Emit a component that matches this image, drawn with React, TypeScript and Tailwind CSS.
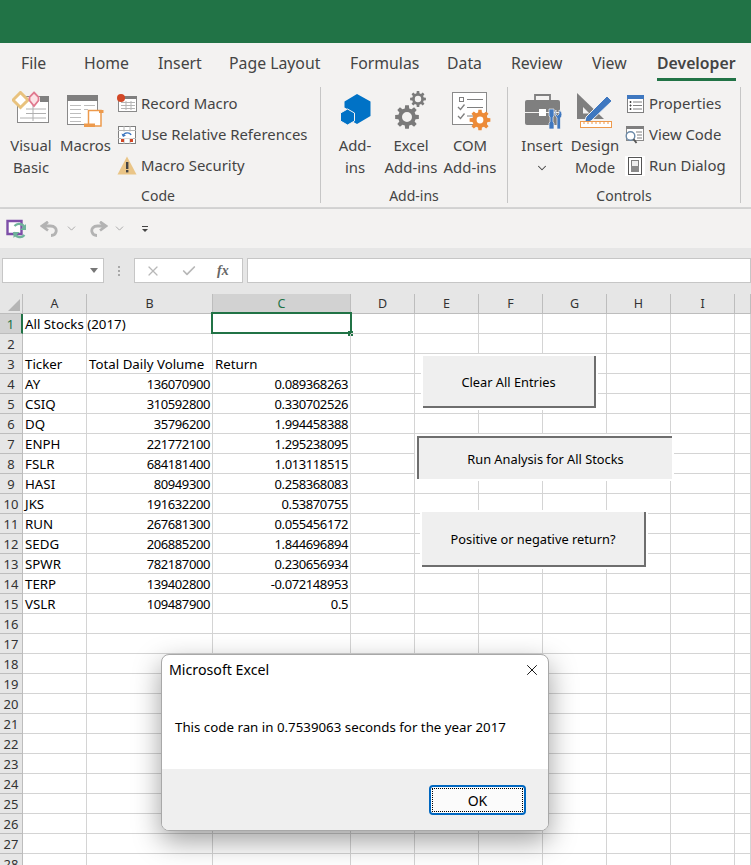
import React from 'react';
import { X, Check, ChevronDown } from 'lucide-react';

const UI = "font-['Noto_Sans',sans-serif]";

const tabs = [
  { label: 'File', w: 'w-[64px]', pl: 'pl-[21px]' },
  { label: 'Home', w: 'w-[84px]', pl: 'pl-[20px]' },
  { label: 'Insert', w: 'w-[71px]', pl: 'pl-[10px]' },
  { label: 'Page Layout', w: 'w-[121px]', pl: 'pl-[10px]' },
  { label: 'Formulas', w: 'w-[97px]', pl: 'pl-[10px]' },
  { label: 'Data', w: 'w-[64px]', pl: 'pl-[10px]' },
  { label: 'Review', w: 'w-[81px]', pl: 'pl-[10px]' },
  { label: 'View', w: 'w-[75px]', pl: 'pl-[10px]' },
];

const rows: [string, string, string][] = [
  ['AY', '136070900', '0.089368263'],
  ['CSIQ', '310592800', '0.330702526'],
  ['DQ', '35796200', '1.994458388'],
  ['ENPH', '221772100', '1.295238095'],
  ['FSLR', '684181400', '1.013118515'],
  ['HASI', '80949300', '0.258368083'],
  ['JKS', '191632200', '0.53870755'],
  ['RUN', '267681300', '0.055456172'],
  ['SEDG', '206885200', '1.844696894'],
  ['SPWR', '782187000', '0.230656934'],
  ['TERP', '139402800', '-0.072148953'],
  ['VSLR', '109487900', '0.5'],
];

const colHeads = ['A', 'B', 'C', 'D', 'E', 'F', 'G', 'H', 'I', ''];

// outline of a toothed wheel with a round hole, for fill-rule evenodd
const gearPath = (cx: number, cy: number, r: number, hole: number, teeth = 8) => {
  const inner = r * 0.74;
  const step = (Math.PI * 2) / teeth;
  const at = (rad: number, a: number) => `${(cx + rad * Math.cos(a)).toFixed(2)} ${(cy + rad * Math.sin(a)).toFixed(2)}`;
  let d = '';
  for (let i = 0; i < teeth; i++) {
    const a = i * step;
    d += `${i === 0 ? 'M' : 'L'}${at(inner, a - step * 0.32)}L${at(r, a - step * 0.2)}L${at(r, a + step * 0.2)}L${at(inner, a + step * 0.32)}`;
  }
  d += `ZM${cx - hole} ${cy}a${hole} ${hole} 0 1 0 ${hole * 2} 0a${hole} ${hole} 0 1 0 ${-hole * 2} 0Z`;
  return d;
};

const VisualBasicIcon = () => (
  <svg width="38" height="33" viewBox="0 0 38 33">
    <rect x="5.5" y="5.5" width="31" height="26" fill="#fff" stroke="#8a8a8a" />
    <rect x="28" y="5" width="9" height="6" fill="#7f7f7f" />
    <path d="M14 18h20M14 22.5h20M8 27h26M21 14v16" stroke="#b0b0b0" />
    <path d="M8.5 1.5l7.5 7.5-7.5 7.5L1 9z" fill="#fff" stroke="#e8c27e" strokeWidth="3" />
    <path d="M22 1.5l4.5 4.5v3.5L22 15l-4.500-5.500V6z" fill="#fbe3e6" stroke="#e0798f" strokeWidth="1.8" />
  </svg>
);

const MacrosIcon = () => (
  <svg width="37" height="33" viewBox="0 0 37 33">
    <rect x="0.5" y="0.5" width="30" height="29" fill="#fff" stroke="#8a8a8a" />
    <rect x="0" y="0" width="31" height="6" fill="#7f7f7f" />
    <path d="M3 10.5h11M17 10.5h11M3 14.5h11M17 14.5h4M3 18.5h11M3 22.5h11M3 26.5h11" stroke="#bdbdbd" />
    <path d="M21.5 15.5h12.5v15.5H21.5z" fill="#fff" stroke="#ed9a4c" strokeWidth="1.5" />
    <path d="M17 28.5h11v3.5H17z" fill="#ed9a4c" />
    <path d="M32 15h4.5v3H32z" fill="#ed9a4c" />
  </svg>
);

const RecordIcon = () => (
  <svg width="20" height="19" viewBox="0 0 20 19">
    <rect x="1.5" y="2.5" width="18" height="15" fill="#fff" stroke="#8a8a8a" />
    <rect x="1" y="2" width="19" height="3" fill="#7f7f7f" />
    <path d="M4 8.5h14M4 11.5h14M4 14.5h14M9 7v9M14 7v9" stroke="#b5b5b5" />
    <circle cx="4" cy="4" r="4" fill="#d24726" />
  </svg>
);

const RelativeIcon = () => (
  <svg width="18" height="18" viewBox="0 0 18 18">
    <rect x="0.5" y="0.5" width="17" height="17" fill="#fff" stroke="#7f7f7f" />
    <path d="M0 4.5h18M0 12.5h18M6 0v18M12 0v18" stroke="#b5b5b5" />
    <rect x="3" y="5.5" width="12" height="7" fill="#fff" />
    <path d="M5 10c1-4 7-4 8-1" fill="none" stroke="#3f78c0" strokeWidth="1.4" />
    <path d="M3.5 7.5l1.5 3.5 3-1.5z" fill="#3f78c0" />
    <rect x="3" y="13" width="3" height="3" fill="#d24726" />
    <rect x="12" y="13" width="3" height="3" fill="#d24726" />
  </svg>
);

const ShieldIcon = () => (
  <svg width="20" height="19" viewBox="0 0 20 19">
    <path d="M10 0.5L19.5 18.5H0.5z" fill="#eac587" />
    <rect x="9" y="6" width="2.4" height="7" fill="#444" />
    <rect x="9" y="14" width="2.4" height="2.4" fill="#444" />
  </svg>
);

const AddinsIcon = () => (
  <svg width="31" height="32" viewBox="0 0 31 32">
    <path d="M17 0l13.5 7.5v14.5L17 30 10 26V16.5L4.5 13.5V7.5z" fill="#0072c6" />
    <path d="M7.5 15l7 4v8l-7 4-7-4v-8z" fill="#0072c6" stroke="#f3f2f1" strokeWidth="1" />
  </svg>
);

const ExcelAddinsIcon = () => (
  <svg width="32" height="39" viewBox="0 0 32 39">
    <path d={gearPath(23, 8, 8, 3.2)} fill="#7a7a7a" fillRule="evenodd" />
    <path d={gearPath(12, 26, 12, 5)} fill="#7a7a7a" fillRule="evenodd" />
  </svg>
);

const ComIcon = () => (
  <svg width="39" height="39" viewBox="0 0 39 39">
    <rect x="0.5" y="0.5" width="34" height="32" fill="#fff" stroke="#8a8a8a" />
    <rect x="7.5" y="5.5" width="4" height="4" fill="none" stroke="#7f7f7f" />
    <path d="M15 7.5h16M15 15.5h16M15 24h8" stroke="#7f7f7f" />
    <path d="M6 15l2.5 2.5 4-5M6 24l2.5 2.5 4-5" fill="none" stroke="#7f7f7f" strokeWidth="1.3" />
    <path d={gearPath(28, 28, 10.5, 3.4)} fill="#ed8b38" fillRule="evenodd" />
  </svg>
);

const InsertIcon = () => (
  <svg width="39" height="37" viewBox="0 0 39 37">
    <path d="M10 7V2h15v5" fill="none" stroke="#7f7f7f" strokeWidth="1.8" />
    <rect x="0" y="7" width="35" height="25" rx="2" fill="#7f7f7f" />
    <path d="M0 19.5h35" stroke="#f3f2f1" strokeWidth="1" />
    <rect x="14" y="16" width="7" height="7" fill="#fff" />
    <path d="M24 16h5v7l-1 1v5l1 1v6h-5v-6l1-1v-5l-1-1z" fill="#3f78c0" stroke="#f3f2f1" strokeWidth="0.7" />
    <path d="M31 17v4l1.500 1.500L34 21v-4c2.500 1 3.500 4 2.500 6.500L35.500 25v11h-3.500V25l-1-1.500c-1.500-2-1.500-5 0-6.500z" fill="#3f78c0" stroke="#f3f2f1" strokeWidth="0.7" />
  </svg>
);

const DesignIcon = () => (
  <svg width="36" height="37" viewBox="0 0 36 37">
    <path d="M0 1v26h27z" fill="#7f7f7f" />
    <path d="M6 15v6.500h6.500z" fill="#f3f2f1" />
    <path d="M9 25L30 4l5 5-21 20-6.500 2z" fill="#3f78c0" stroke="#f3f2f1" strokeWidth="1" />
    <rect x="3.500" y="29.500" width="31" height="6" fill="#fff" stroke="#ed9a4c" />
    <path d="M7 30v2M11 30v2M15 30v2M19 30v2M23 30v2M27 30v2M31 30v2" stroke="#ed9a4c" />
  </svg>
);

const PropertiesIcon = () => (
  <svg width="17" height="18" viewBox="0 0 17 18">
    <rect x="0.5" y="0.5" width="16" height="17" fill="#fff" stroke="#7f7f7f" />
    <rect x="0" y="0" width="17" height="4" fill="#3f78c0" />
    <path d="M6 7h9M6 10.500h9M6 14h9" stroke="#7f7f7f" />
    <path d="M3 6.500h1v1H3zM3 10h1v1H3zM3 13.500h1v1H3z" fill="#444" stroke="#444" />
  </svg>
);

const ViewCodeIcon = () => (
  <svg width="19" height="18" viewBox="0 0 19 18">
    <rect x="1.500" y="0.500" width="17" height="14" fill="#fff" stroke="#8a8a8a" />
    <rect x="1" y="0" width="18" height="3" fill="#7f7f7f" />
    <path d="M11 6h6M12 9h5M12 12h5" stroke="#7f7f7f" />
    <circle cx="5.500" cy="10" r="4.300" fill="#fff" stroke="#6b8aa8" strokeWidth="1.400" />
    <path d="M8.500 13l3 4" stroke="#555" strokeWidth="1.800" />
  </svg>
);

const RunDialogIcon = () => (
  <svg width="20" height="20" viewBox="0 0 20 20">
    <rect width="20" height="20" fill="#fff" />
    <rect x="3.500" y="1.500" width="13" height="17" fill="#fff" stroke="#555" />
    <rect x="6.500" y="4.500" width="7" height="11" fill="#eee" stroke="#7f7f7f" />
    <rect x="6" y="10" width="8" height="6" fill="#8a8a8a" />
  </svg>
);

const BigButton = ({ icon, lines, w, iconClass }: { icon: React.ReactNode; lines: React.ReactNode[]; w: string; iconClass?: string }) => (
  <div className={`${w} flex shrink-0 flex-col items-center`}>
    <div className={`flex h-[47px] items-end justify-center ${iconClass ?? ''}`}>{icon}</div>
    {lines.map((line, i) => (
      <div key={i} className="h-[22px] whitespace-nowrap text-center leading-[22px]">{line}</div>
    ))}
  </div>
);

const SmallButton = ({ icon, label }: { icon: React.ReactNode; label: string }) => (
  <div className="flex h-[31px] items-center">
    <div className="flex w-[24px] shrink-0 justify-start">{icon}</div>
    <span className="whitespace-nowrap">{label}</span>
  </div>
);

const Group = ({ w, label, labelClass, children }: { w: string; label: string; labelClass?: string; children: React.ReactNode }) => (
  <div className={`${w} flex h-[116px] shrink-0 flex-col border-r border-[#c6c6c6]`}>
    <div className="flex h-[99px] items-start">{children}</div>
    <div className={`h-[17px] text-center text-[14px] leading-[20px] text-[#444] ${labelClass ?? ''}`}>{label}</div>
  </div>
);

const Cell = ({ children, num }: { children?: React.ReactNode; num?: boolean }) => (
  <div
    className={`relative h-[20px] whitespace-nowrap border-b border-r border-[#d4d4d4] text-black ${num ? 'pr-[2px] text-right text-[13px] leading-[21px] tracking-[-0.4px]' : 'pl-[2px] text-left text-[13.3px] leading-[21px]'}`}
  >
    {children}
  </div>
);

const RowHead = ({ n, active }: { n: number; active?: boolean }) => (
  <div
    className={`h-[20px] border-b text-center text-[13px] leading-[21px] ${active ? 'border-r-2 border-b-[#bdbdbd] border-r-[#217346] bg-[#d2d2d2] text-[#217346]' : 'border-r border-[#bdbdbd] bg-[#e6e6e6] text-[#333]'}`}
  >
    {n}
  </div>
);

const EmptyCells = ({ from = 0 }: { from?: number }) => (
  <>
    {Array.from({ length: 10 - from }).map((_, i) => (
      <Cell key={i} />
    ))}
  </>
);

export default function App() {
  return (
    <div className={`relative h-[865px] w-[751px] overflow-hidden bg-white ${UI}`}>
      {/* title bar */}
      <div className="h-[43px] bg-[#217346]" />

      {/* tabs */}
      <div className="flex h-[44px] items-start bg-[#f3f2f1] pt-[8px] text-[15.8px] leading-[24px] text-[#444]">
        {tabs.map((t) => (
          <div key={t.label} className={`${t.w} ${t.pl} shrink-0 whitespace-nowrap`}>{t.label}</div>
        ))}
        <div className="h-[30px] whitespace-nowrap border-b-[3px] border-[#217346] font-semibold text-[#444]">Developer</div>
      </div>

      {/* ribbon */}
      <div className="flex h-[122px] items-start border-b-2 border-[#d5d5d5] bg-[#f3f2f1] text-[14.9px] text-[#444]">
        <Group w="w-[321px]" label="Code" labelClass="pr-[4px]">
          <BigButton w="w-[58px] ml-[2px]" icon={<VisualBasicIcon />} iconClass="pb-[10px]" lines={['Visual', 'Basic']} />
          <BigButton w="w-[51px]" icon={<MacrosIcon />} iconClass="pb-[6px]" lines={['Macros']} />
          <div className="ml-[6px] flex flex-col pt-[1px]">
            <SmallButton icon={<RecordIcon />} label="Record Macro" />
            <SmallButton icon={<div className="pl-[1px]"><RelativeIcon /></div>} label="Use Relative References" />
            <SmallButton icon={<ShieldIcon />} label="Macro Security" />
          </div>
        </Group>
        <Group w="w-[187px]" label="Add-ins">
          <BigButton w="w-[62px] ml-[3px]" icon={<AddinsIcon />} iconClass="pb-[8px]" lines={['Add-', 'ins']} />
          <BigButton w="w-[50px]" icon={<ExcelAddinsIcon />} iconClass="pb-[4px]" lines={['Excel', 'Add-ins']} />
          <BigButton w="w-[68px]" icon={<ComIcon />} iconClass="pb-[3px] pl-[2px]" lines={['COM', 'Add-ins']} />
        </Group>
        <Group w="w-[233px]" label="Controls">
          <BigButton
            w="w-[60px] ml-[4px]"
            icon={<InsertIcon />}
            iconClass="pb-[4px] pl-[4px]"
            lines={['Insert', <ChevronDown key="c" size={14} strokeWidth={1.8} className="mx-auto mt-[5px] text-[#444]" />]}
          />
          <BigButton w="w-[46px]" icon={<DesignIcon />} iconClass="pb-[5px]" lines={['Design', 'Mode']} />
          <div className="ml-[7px] flex flex-col pt-[1px]">
            <SmallButton icon={<div className="pl-[2px]"><PropertiesIcon /></div>} label="Properties" />
            <SmallButton icon={<ViewCodeIcon />} label="View Code" />
            <SmallButton icon={<RunDialogIcon />} label="Run Dialog" />
          </div>
        </Group>
      </div>

      {/* quick access */}
      <div className="flex h-[39px] items-center bg-[#f3f2f1] pl-[6px] shadow-[0_2px_4px_rgba(0,0,0,0.14)]">
        <svg width="21" height="20" viewBox="0 0 21 20">
          <path d="M1.500 2h14v13h-14z" fill="#fff" stroke="#7d4fa8" strokeWidth="2.400" />
          <path d="M19 10a6 6 0 0 0-10.500-3M8 13a6 6 0 0 0 10.500 3" fill="none" stroke="#6fb39a" strokeWidth="2.200" />
          <path d="M20 5v6h-6zM7.500 19v-6h6z" fill="#6fb39a" />
        </svg>
        <svg width="20" height="16" viewBox="0 0 20 16" className="ml-[13px]">
          <path d="M8 0.800L2 5l6 4.500M2 5h8.500c4 0 6.500 2.500 5.500 6-.5 2-2.500 3.500-5 3.500" fill="none" stroke="#b3b3b3" strokeWidth="2.800" />
        </svg>
        <ChevronDown size={13} strokeWidth={1.6} className="ml-[5px] text-[#a0a0a0]" />
        <svg width="20" height="16" viewBox="0 0 20 16" className="ml-[10px]">
          <path d="M12 0.800L18 5l-6 4.500M18 5H9.500c-4 0-6.500 2.500-5.500 6 .5 2 2.500 3.500 5 3.500" fill="none" stroke="#b3b3b3" strokeWidth="2.800" />
        </svg>
        <ChevronDown size={13} strokeWidth={1.6} className="ml-[5px] text-[#a0a0a0]" />
        <svg width="6" height="6" viewBox="0 0 6 6" className="ml-[16px]">
          <path d="M0 0.500h6" stroke="#444" />
          <path d="M0 3h6L3 6z" fill="#444" />
        </svg>
      </div>

      {/* formula bar */}
      <div className="flex h-[46px] items-start bg-[#e6e6e6] pt-[10px]">
        <div className="ml-[2px] flex h-[25px] w-[102px] items-center justify-end border border-[#c6c6c6] bg-white pr-[5px]">
          <svg width="8" height="5" viewBox="0 0 8 5"><path d="M0 0h8L4 5z" fill="#777" /></svg>
        </div>
        <div className="flex h-[25px] w-[30px] items-center justify-center">
          <svg width="2" height="10" viewBox="0 0 2 10"><path d="M0 0h2v2H0zM0 4h2v2H0zM0 8h2v2H0z" fill="#a8a8a8" /></svg>
        </div>
        <div className="flex h-[25px] w-[109px] items-center border border-[#c6c6c6] bg-white pl-[10px]">
          <X size={16} strokeWidth={1.8} className="text-[#b8b8b8]" />
          <Check size={16} strokeWidth={2.6} className="ml-[20px] text-[#b8b8b8]" />
          <span className="ml-[20px] font-['Liberation_Serif',serif] text-[14px] font-bold italic leading-none text-[#666]">fx</span>
        </div>
        <div className="ml-[4px] h-[25px] w-[504px] border border-[#c6c6c6] bg-white" />
      </div>

      {/* sheet */}
      <div className="grid grid-cols-[23px_64px_126px_138px_64px_64px_64px_64px_64px_64px_16px]">
        <div className="flex h-[20px] items-end justify-end border-b border-r border-[#bdbdbd] bg-[#e6e6e6] p-[2px]">
          <svg width="12" height="12" viewBox="0 0 12 12"><path d="M12 0v12H0z" fill="#b5b5b5" /></svg>
        </div>
        {colHeads.map((c) => (
          <div
            key={c}
            className={`h-[20px] border-b border-r border-[#bdbdbd] text-center text-[12.5px] leading-[20px] ${c === 'C' ? 'bg-[#d2d2d2] text-[#217346]' : 'bg-[#e6e6e6] text-[#333]'}`}
          >
            {c}
          </div>
        ))}

        <RowHead n={1} active />
        <Cell>All Stocks (2017)</Cell>
        <Cell />
        <Cell>
          <div className="absolute -left-[2px] -top-[2px] h-[22px] w-[141px] border-2 border-[#217346]" />
          <div className="absolute left-[135px] top-[17px] h-[5px] w-[5px] bg-[#217346]" />
        </Cell>
        <EmptyCells from={3} />

        <RowHead n={2} />
        <EmptyCells />

        <RowHead n={3} />
        <Cell>Ticker</Cell>
        <Cell>Total Daily Volume</Cell>
        <Cell>Return</Cell>
        <EmptyCells from={3} />

        {rows.map((r, i) => (
          <React.Fragment key={r[0]}>
            <RowHead n={i + 4} />
            <Cell>{r[0]}</Cell>
            <Cell num>{r[1]}</Cell>
            <Cell num>{r[2]}</Cell>
            <EmptyCells from={3} />
          </React.Fragment>
        ))}

        {Array.from({ length: 13 }).map((_, i) => (
          <React.Fragment key={i}>
            <RowHead n={i + 16} />
            <EmptyCells />
          </React.Fragment>
        ))}
      </div>

      {/* form buttons sitting on the sheet */}
      <div className="absolute left-[423px] top-[356px] flex h-[52px] w-[173px] items-center justify-center border-b-2 border-r-2 border-[#6e6e6e] bg-[#efefef] pt-[3px] text-[12.8px] text-black shadow-[0_0_0_2px_#fff]">
        Clear All Entries
      </div>
      <div className="absolute left-[417px] top-[436px] flex h-[43px] w-[255px] items-center justify-center border-l-2 border-t-2 border-[#6e6e6e] bg-[#efefef] pt-[3px] text-[12.8px] text-black shadow-[0_0_0_2px_#fff]">
        Run Analysis for All Stocks
      </div>
      <div className="absolute left-[422px] top-[512px] flex h-[55px] w-[224px] items-center justify-center border-b-2 border-r-2 border-[#6e6e6e] bg-[#efefef] pt-[3px] text-[12.8px] text-black shadow-[0_0_0_2px_#fff]">
        Positive or negative return?
      </div>

      {/* message box */}
      <div className="absolute left-[161px] top-[654px] flex h-[177px] w-[388px] flex-col overflow-hidden rounded-[8px] border border-[#a8a8a8] bg-white shadow-[0_10px_28px_rgba(0,0,0,0.38)]">
        <div className="flex h-[29px] shrink-0 items-center justify-between pl-[7px] pr-[7px] text-[14.2px] text-black">
          <span>Microsoft Excel</span>
          <X size={18} strokeWidth={1.2} />
        </div>
        <div className="flex h-[85px] shrink-0 items-start pl-[13px] pt-[33px] text-[13.3px] leading-[20px] text-black">
          This code ran in 0.7539063 seconds for the year 2017
        </div>
        <div className="flex flex-1 items-start justify-end bg-[#efefef] pr-[22px] pt-[16px]">
          <div className="flex h-[30px] w-[97px] items-center justify-center rounded-[4px] border-2 border-[#0067c0] bg-[#fbfbfb] p-[1px]">
            <div className="flex h-full w-full items-center justify-center border border-dotted border-black text-[14px] text-black">OK</div>
          </div>
        </div>
      </div>
    </div>
  );
}
